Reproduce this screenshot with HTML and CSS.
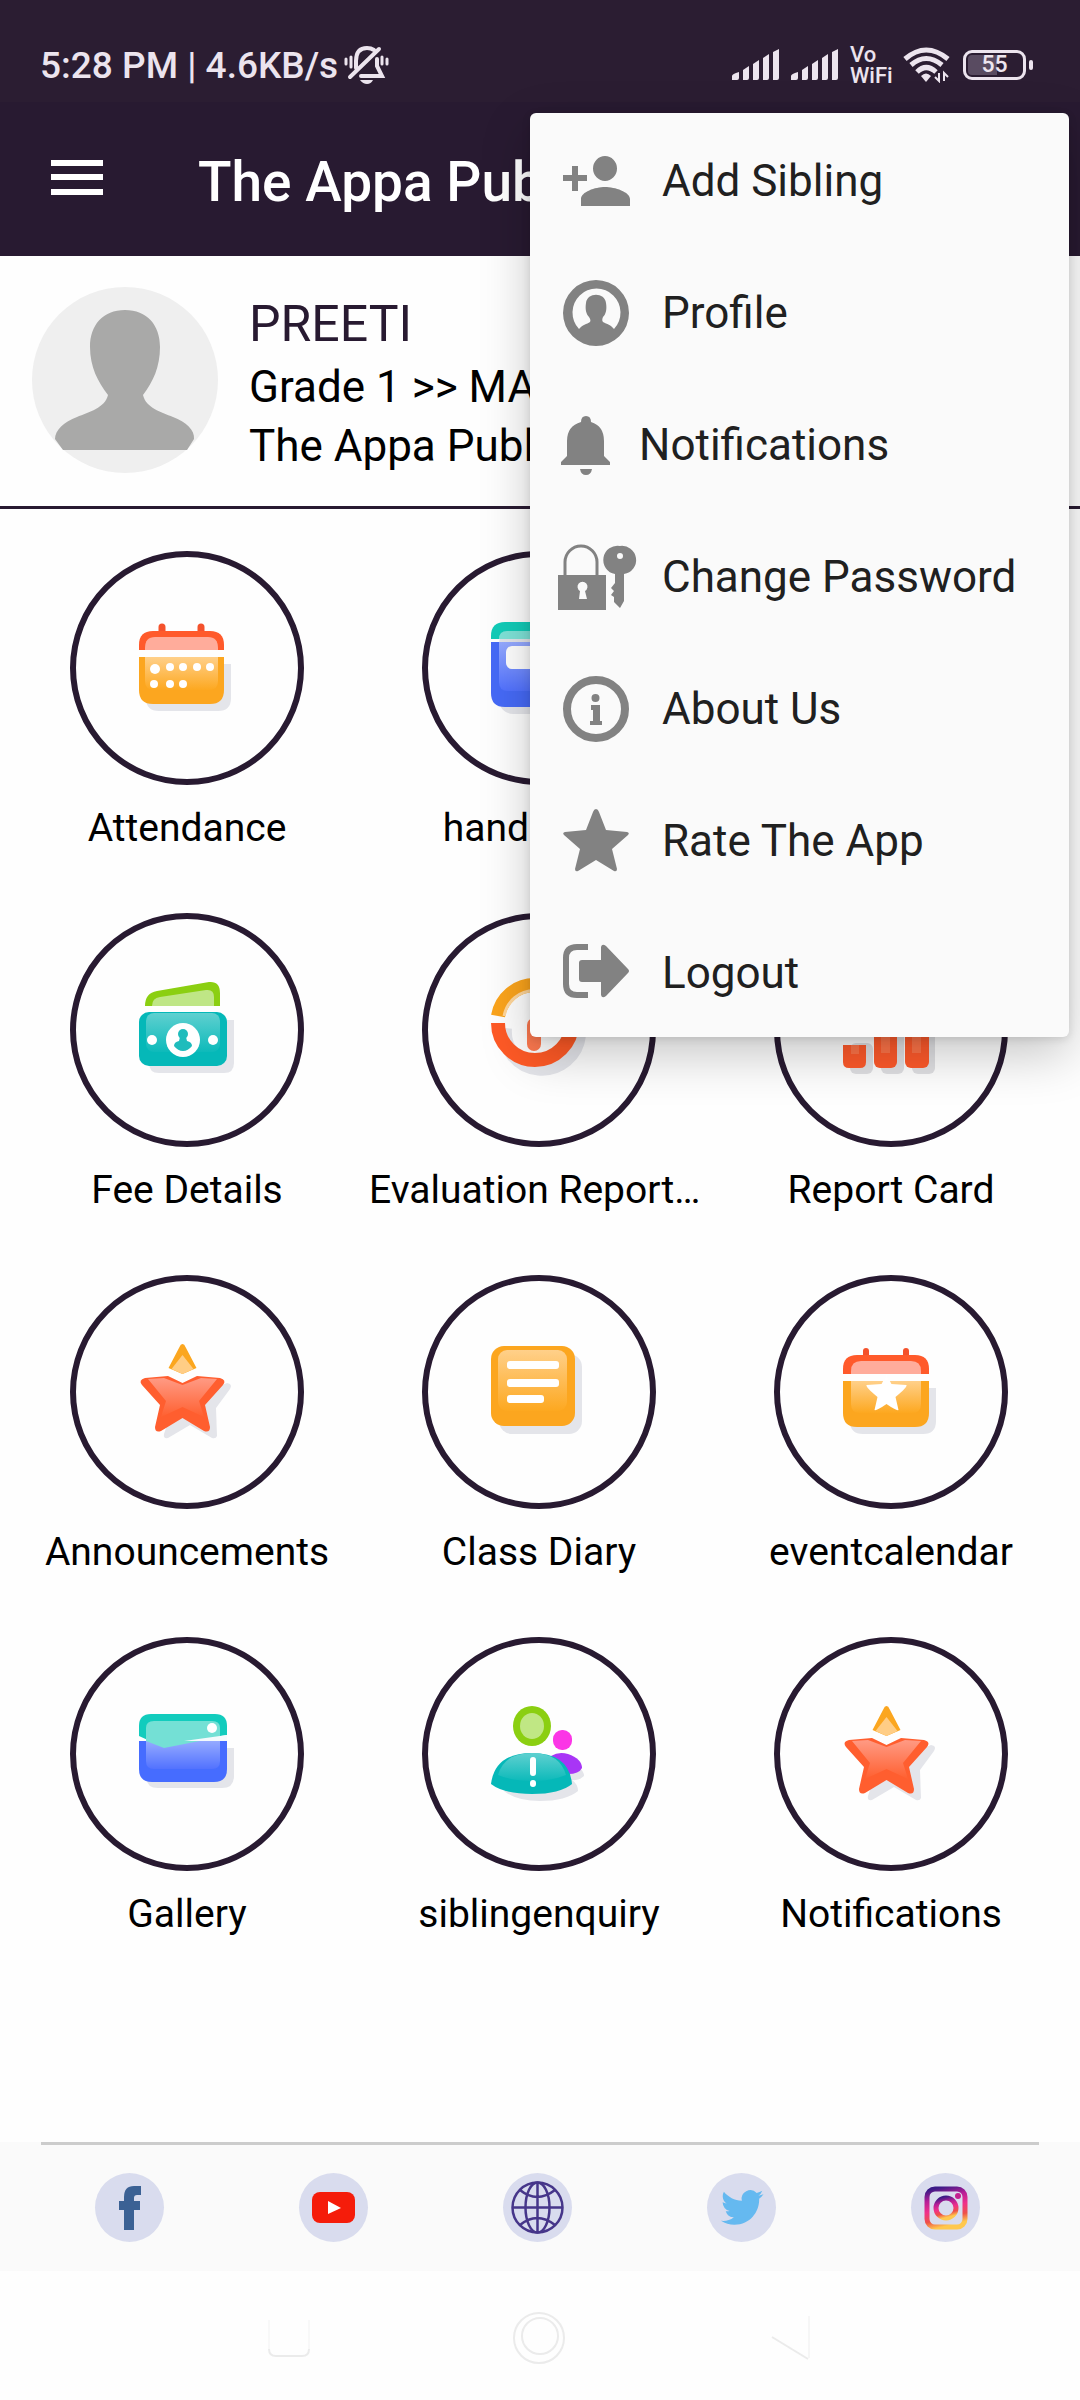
FILE: index.html
```html
<!DOCTYPE html>
<html lang="en">
<head>
<meta charset="utf-8">
<meta name="viewport" content="width=device-width, initial-scale=1">
<title>The Appa Public</title>
<link rel="stylesheet" href="styles.css">
</head>
<body>
<svg class="defs" aria-hidden="true">
  <defs>
    <linearGradient id="g-orange" x1="0" y1="0" x2="0" y2="1"><stop offset="0" stop-color="#ffd08a"/><stop offset="1" stop-color="#fda820"/></linearGradient>
    <linearGradient id="g-red" x1="0" y1="0" x2="0" y2="1"><stop offset="0" stop-color="#ff9a84"/><stop offset="1" stop-color="#ff6030"/></linearGradient>
    <linearGradient id="g-blue" x1="0" y1="0" x2="0" y2="1"><stop offset="0" stop-color="#95aaff"/><stop offset="1" stop-color="#5272ff"/></linearGradient>
    <linearGradient id="g-teal" x1="0" y1="0" x2="0" y2="1"><stop offset="0" stop-color="#5fd0d0"/><stop offset="1" stop-color="#0dbaba"/></linearGradient>
    <linearGradient id="g-insta" x1="0.15" y1="0" x2="0.4" y2="1"><stop offset="0" stop-color="#3a1a86"/><stop offset="0.28" stop-color="#b81f97"/><stop offset="0.55" stop-color="#f0308a"/><stop offset="0.8" stop-color="#ee5148"/><stop offset="1" stop-color="#ffc84e"/></linearGradient>
    <symbol id="star-tile" viewBox="6 6 222 222">
      <path d="M157 108q6 1 3 6l-14 19 1 28q-1 3-5 2l-22-13-22 13q-5 1-4-4l10-30z" fill="#e4e5ea"/>
      <path d="M112.500 69q2 0 3 3l11 21-14 6-14-6 11-21q1-3 3-3z" fill="#fba61f"/>
      <path d="M112.500 80l11 14-11 5-11-5z" fill="#ffcd85"/>
      <path d="M98 101l14.500 7 14.500-7 23 2q7 2 3 7l-18 20 5 22q0 6-6 4l-21.500-13-21.500 13q-6 2-6-4l5-22-18-20q-4-5 3-7z" fill="#ff5e2f"/>
      <path d="M94 103l18.500 7 18.500-7 16 1-18 22 5 16-21.500-10-21.500 10 5-16-18-22z" fill="url(#g-red)"/>
    </symbol>
    <symbol id="signal" viewBox="0 0 48 32">
      <path d="M0 31v-4q0-2 7-4v6q0 2-2 2zM11 31V21l6-4v12q0 2-2 2zM21 31V15l6-4v18q0 2-2 2zM31 31V9l6-4v24q0 2-2 2zM41 31V3l6-3v29q0 2-2 2z" fill="#ece4ee"/>
    </symbol>
  </defs>
</svg>

<div class="status">
  <span class="status-text">5:28 PM | 4.6KB/s</span>
  <svg class="mute" width="45" height="38" viewBox="0 0 45 38" fill="none" stroke="#ece4ee" stroke-width="4" stroke-linecap="round">
    <path d="M6 31L35 3M12 22V15Q12 2 23 2Q27 2 30 4M33 13V20L38 30H17"/>
    <path d="M2 13v5M7 11v10M43 13v5M38 11v7" stroke-width="3"/>
    <path d="M16 34h13q-2 4-6 4t-7-4z" fill="#ece4ee" stroke="none"/>
  </svg>
  <div class="status-icons">
    <svg width="48" height="32"><use href="#signal"/></svg>
    <svg width="48" height="32"><use href="#signal"/></svg>
    <span class="vowifi"><span>Vo</span><span>WiFi</span></span>
    <svg width="47" height="36" viewBox="0 0 47 36" fill="none" stroke="#ece4ee" stroke-width="5" stroke-linecap="butt">
      <path d="M2 12Q23 -6 45 12M8 18Q23 5 39 18M14 25Q23 16 33 25"/>
      <path d="M18 29q5-5 10 0l-5 6z" fill="#ece4ee" stroke="none"/>
      <path d="M36 26v8l-4-4M41 34v-8l4 4" stroke-width="2"/>
    </svg>
    <span class="battery"><span class="battery-level">55</span></span>
  </div>
</div>

<header class="bar">
  <button class="menu-button" type="button" aria-label="Open navigation">
    <svg width="52" height="36" viewBox="0 0 52 36"><path d="M0 0h52v6H0zM0 14h52v6H0zM0 29h52v6H0z" fill="#fff"/></svg>
  </button>
  <h1>The Appa Public</h1>
</header>

<section class="profile">
  <svg class="avatar" width="186" height="186" viewBox="0 0 186 186">
    <circle cx="93" cy="93" r="93" fill="#efefef"/>
    <path d="M93 23c22 0 35 15 35 37 0 20-7 35-17 48 3 13 18 17 30 22 13 5 22 13 21 22l-7 11H31l-8-11c0-9 9-17 22-22 12-5 28-9 31-22-10-13-18-28-18-48 0-22 13-37 35-37z" fill="#a9a9a8"/>
  </svg>
  <div class="profile-text">
    <h2>PREETI</h2>
    <p>Grade 1 &gt;&gt; MA</p>
    <p>The Appa Public</p>
  </div>
</section>

<main>
  <ul class="tiles">
    <li><a class="tile" href="#attendance">
      <span class="ring"><svg viewBox="6 6 222 222">
        <path d="M76 113h85v34q0 13-13 13H89q-13 0-13-13z" fill="#e4e5ea"/>
        <path d="M92 76v8M131 76v8" stroke="#f4522c" stroke-width="7" stroke-linecap="round"/>
        <path d="M69 99v-5q0-14 14-14h57q14 0 14 14v5z" fill="#ff5a2b"/>
        <path d="M75 99v-2q0-11 10-11h53q10 0 10 11v2z" fill="#ffac9b"/>
        <path d="M69 106h85v33q0 14-14 14H83q-14 0-14-14z" fill="#fca61f"/>
        <path d="M75 106h73v24q0 9-9 9H84q-9 0-9-9z" fill="url(#g-orange)"/>
        <g fill="#fff"><circle cx="85" cy="118" r="5"/><circle cx="100" cy="116" r="4"/><circle cx="113" cy="116" r="4"/><circle cx="127" cy="116" r="4"/><circle cx="140" cy="116" r="4"/><circle cx="84" cy="133" r="4"/><circle cx="100" cy="133" r="4"/><circle cx="113" cy="133" r="4"/></g>
      </svg></span>
      <span class="label">Attendance</span></a></li>
    <li><a class="tile" href="#handbooks">
      <span class="ring"><svg viewBox="6 6 222 222">
        <rect x="77" y="79" width="86" height="84" rx="14" fill="#e4e5ea"/>
        <path d="M69 88v-3q0-14 14-14h58q14 0 14 14v3z" fill="#12ccb8"/>
        <path d="M77 88q0-8 8-8h70v8z" fill="#7fe3d8"/>
        <path d="M69 91h86v51q0 14-14 14H83q-14 0-14-14z" fill="#466af7"/>
        <path d="M77 91h70v49H86q-9 0-9-9z" fill="url(#g-blue)"/>
        <rect x="84" y="95" width="57" height="23" rx="6" fill="#fff"/>
      </svg></span>
      <span class="label">handbooks</span></a></li>
    <li class="row-start"><a class="tile" href="#fees">
      <span class="ring"><svg viewBox="6 6 222 222">
        <path d="M79 107h85v43q0 10-10 10H89q-10 0-10-10z" fill="#e4e5ea"/>
        <path d="M75 93q0-13 12-15l52-9q11-1 11 11v13z" fill="#8bcf11"/>
        <path d="M82 93q0-8 8-9l46-7q8-1 8 7v9z" fill="#bfe686"/>
        <rect x="69" y="99" width="88" height="54" rx="10" fill="#05b8b8"/>
        <rect x="76" y="100" width="74" height="39" rx="8" fill="url(#g-teal)"/>
        <g fill="#fff"><circle cx="113" cy="127" r="17"/><circle cx="82" cy="127" r="5"/><circle cx="143" cy="127" r="5"/></g>
        <circle cx="113" cy="121" r="5" fill="#1fbcbc"/><path d="M110 124h6l1 4q5 1 5 5-4 5-9 5t-9-5q0-4 5-5z" fill="#1fbcbc"/>
      </svg></span>
      <span class="label">Fee Details</span></a></li>
    <li><a class="tile" href="#evaluation">
      <span class="ring"><svg viewBox="6 6 222 222" fill="none">
        <path d="M83 115a37 37 0 0 0 74 7" stroke="#e4e5ea" stroke-width="14"/>
        <path d="M76 103a37 37 0 0 1 73 0" stroke="#fba41c" stroke-width="14"/>
        <path d="M82 103a31 31 0 0 1 61 0" stroke="#ffd79c" stroke-width="3"/>
        <path d="M76 110a37 37 0 1 0 74 0" stroke="#ff5a26" stroke-width="14"/>
        <path d="M112 112v19" stroke="#ff7a50" stroke-width="14" stroke-linecap="round"/>
      </svg></span>
      <span class="label label-long">Evaluation Report…</span></a></li>
    <li><a class="tile" href="#report">
      <span class="ring"><svg viewBox="6 6 222 222">
        <g fill="#e0e0e3"><rect x="76" y="130" width="23" height="31" rx="6"/><rect x="107" y="110" width="23" height="51" rx="6"/><rect x="138" y="100" width="23" height="61" rx="6"/></g>
        <g fill="#ff5a2b"><path d="M69 132h23v17q0 6-6 6H75q-6 0-6-6z"/><rect x="100" y="100" width="23" height="55" rx="6"/><rect x="131" y="85" width="24" height="70" rx="6"/></g>
        <path d="M77 132h8v9h-8zM107 120h9v20h-9zM138 120h9v20h-9z" fill="#ff7448"/>
      </svg></span>
      <span class="label">Report Card</span></a></li>
    <li><a class="tile" href="#announcements">
      <span class="ring"><svg><use href="#star-tile"/></svg></span>
      <span class="label">Announcements</span></a></li>
    <li><a class="tile" href="#diary">
      <span class="ring"><svg viewBox="6 6 222 222">
        <rect x="77" y="79" width="83" height="80" rx="13" fill="#e4e5ea"/>
        <rect x="69" y="71" width="84" height="80" rx="13" fill="#fca61f"/>
        <rect x="76" y="75" width="69" height="61" rx="9" fill="url(#g-orange)"/>
        <g fill="#fff"><rect x="85" y="86" width="52" height="8" rx="3"/><rect x="85" y="104" width="52" height="8" rx="3"/><rect x="85" y="120" width="37" height="8" rx="3"/></g>
      </svg></span>
      <span class="label">Class Diary</span></a></li>
    <li><a class="tile" href="#events">
      <span class="ring"><svg viewBox="6 6 222 222">
        <path d="M76 113h86v33q0 13-13 13H89q-13 0-13-13z" fill="#e4e5ea"/>
        <path d="M92 76v8M132 76v8" stroke="#f4522c" stroke-width="6" stroke-linecap="round"/>
        <path d="M69 99v-5q0-14 14-14h58q14 0 14 14v5z" fill="#ff5a2b"/>
        <path d="M77 99v-3q0-10 10-10h50q10 0 10 10v3z" fill="#ffac9b"/>
        <path d="M69 106h86v32q0 14-14 14H83q-14 0-14-14z" fill="#fca61f"/>
        <path d="M77 106h70v23q0 9-9 9H86q-9 0-9-9z" fill="url(#g-orange)"/>
        <path d="M112.500 100l5 9 15 1q1 2-11 12l3 13q-2 1-12-6-10 7-12 6l3-13q-12-10-11-12l15-1z" fill="#fff"/>
      </svg></span>
      <span class="label">eventcalendar</span></a></li>
    <li><a class="tile" href="#gallery">
      <span class="ring"><svg viewBox="6 6 222 222">
        <path d="M76 111h88v28q0 12-12 12H88q-12 0-12-12z" fill="#e4e5ea"/>
        <path d="M69 104h88v28q0 13-13 13H82q-13 0-13-13z" fill="#466cff"/>
        <path d="M76 104h74v20q0 8-8 8H84q-8 0-8-8z" fill="url(#g-blue)"/>
        <path d="M69 99V89q0-12 12-12h64q12 0 12 12v9l-37 6H80z" fill="#12ccbd"/>
        <path d="M76 104V91q0-7 8-7h58q8 0 8 7v9l-56 11z" fill="#74e0d5"/>
        <path d="M157 98v6h-43z" fill="#f4fafc"/>
        <circle cx="142" cy="91" r="5" fill="#fff"/>
      </svg></span>
      <span class="label">Gallery</span></a></li>
    <li><a class="tile" href="#siblings">
      <span class="ring"><svg viewBox="6 6 222 222">
        <path d="M140 123q22 6 22 16-5 5-12 4 6 4 6 11-12 10-38 10-24 0-36-10z" fill="#e4e5ea"/>
        <rect x="131" y="93" width="19" height="20" rx="9" fill="#fb36e6"/>
        <path d="M129 119q8-5 17-2 14 5 14 14-3 6-14 6z" fill="#a835f6"/>
        <ellipse cx="110" cy="89" rx="19" ry="20" fill="#8bcf11"/>
        <ellipse cx="110" cy="89" rx="12" ry="13" fill="#c0e784"/>
        <path d="M69 147q4-31 41-31t40 31q-12 10-40 10t-41-10z" fill="#05b8b8"/>
        <path d="M76 138q6-22 34-22t34 22q-14 6-34 6t-34-6z" fill="url(#g-teal)"/>
        <path d="M111 123v13M111 146v1" stroke="#fff" stroke-width="6" stroke-linecap="round"/>
      </svg></span>
      <span class="label">siblingenquiry</span></a></li>
    <li><a class="tile" href="#notifications">
      <span class="ring"><svg><use href="#star-tile"/></svg></span>
      <span class="label">Notifications</span></a></li>
  </ul>
</main>

<footer class="social">
  <ul>
    <li><a href="#facebook" aria-label="Facebook"><svg viewBox="0 0 69 69"><path d="M46 13v9h-4q-3 0-3 3v3h6v9h-6v20h-10V37h-5v-9h5v-4q0-11 10-11z" fill="#3b6194"/></svg></a></li>
    <li><a href="#youtube" aria-label="YouTube"><svg viewBox="0 0 69 69"><rect x="13" y="19" width="43" height="31" rx="8" fill="#f51c0a"/><path d="M29 28l13 7-13 6z" fill="#fff"/></svg></a></li>
    <li><a href="#website" aria-label="Website"><svg viewBox="0 0 69 69" fill="none" stroke="#46368a" stroke-width="2.500"><circle cx="34.500" cy="34.500" r="25"/><ellipse cx="34.500" cy="34.500" rx="12" ry="25"/><path d="M34.500 9v51M9 34.500h51M17 17q17 14 35 0M17 52q17-14 35 0"/></svg></a></li>
    <li><a href="#twitter" aria-label="Twitter"><svg viewBox="0 0 69 69"><path transform="translate(14 13.200) scale(1.770)" fill="#65b9f0" d="M23.953 4.570a10 10 0 01-2.825.775 4.958 4.958 0 002.163-2.723c-.951.555-2.005.959-3.127 1.184a4.920 4.920 0 00-8.384 4.482C7.690 8.095 4.067 6.130 1.640 3.162a4.822 4.822 0 00-.666 2.475c0 1.710.870 3.213 2.188 4.096a4.904 4.904 0 01-2.228-.616v.060a4.923 4.923 0 003.946 4.827 4.996 4.996 0 01-2.212.085 4.936 4.936 0 004.604 3.417 9.867 9.867 0 01-6.102 2.105c-.390 0-.779-.023-1.170-.067a13.995 13.995 0 007.557 2.209c9.053 0 13.998-7.496 13.998-13.985 0-.210 0-.420-.015-.630A9.935 9.935 0 0024 4.590z"/></svg></a></li>
    <li><a href="#instagram" aria-label="Instagram"><svg viewBox="0 0 69 69"><g fill="none" stroke="url(#g-insta)" stroke-width="5"><rect x="16" y="16" width="38" height="38" rx="8"/><circle cx="35" cy="35" r="10"/></g><circle cx="47" cy="23" r="3" fill="#c3208f"/></svg></a></li>
  </ul>
</footer>

<nav class="system-nav" aria-label="System">
  <button type="button" aria-label="Recent apps"><svg width="52" height="52" viewBox="0 0 52 52" fill="none" stroke-width="2"><path d="M7 8v30M47 8v30" stroke="#f8f8f8"/><path d="M7 37q0 7 7 7h26q7 0 7-7" stroke="#ebebeb"/></svg></button>
  <button type="button" aria-label="Home"><svg width="52" height="52" viewBox="0 0 52 52" fill="none" stroke="#ebebeb" stroke-width="2"><circle cx="26" cy="26" r="25"/><circle cx="27" cy="24" r="18"/></svg></button>
  <button type="button" aria-label="Back"><svg width="52" height="52" viewBox="0 0 52 52" fill="none" stroke="#ebebeb" stroke-width="2"><path d="M8 25l36 22"/><path d="M45 46V4" stroke="#f6f6f6"/></svg></button>
</nav>

<div class="menu" role="menu">
  <button type="button" role="menuitem"><svg viewBox="0 0 66 66"><path d="M9 18h6v9h9v6h-9v10H9V33H0v-6h9zM42 8a12 12.500 0 1 1 0 25 12 12.500 0 0 1 0-25zM18 58v-7c0-7 14-12 24-12s25 5 25 12v7z"/></svg>Add Sibling</button>
  <button type="button" role="menuitem"><svg viewBox="0 0 66 66"><path fill-rule="evenodd" d="M33 0a33 33 0 1 1 0 66 33 33 0 0 1 0-66zM16 49c3-4 8-5 11-7 1-2 0-3-1-5-3-3-4-8-3-14 1-11 19-11 20 0 1 6 0 11-3 14-1 2-1 4 0 5 4 2 8 3 11 7a24 24 0 1 0-35 0z"/></svg>Profile</button>
  <button type="button" role="menuitem"><svg class="narrow" viewBox="0 0 43 66"><path d="M23 4q5 0 5 6 13 4 13 19v15l6 6v3H-2v-3l6-6V29q0-15 14-19 0-6 5-6zM17 57h12q-1 6-6 6t-6-6z"/></svg>Notifications</button>
  <button type="button" role="menuitem"><svg viewBox="0 0 66 66"><path d="M2 32V18a16 16 0 0 1 32 0v14" fill="none" stroke="#828282" stroke-width="3"/><path fill-rule="evenodd" d="M-5 31h48v35H-5zM16 55l1-8a5 5 0 1 1 5 0l2 8zM57 2a14 14 0 0 1 4 28v27l-4 7-6-6v-5l-3-2 3-4-3-3 4-5V30a14 14 0 0 1 5-28zM57 9a3 3 0 1 0 0 6 3 3 0 0 0 0-6z"/></svg>Change Password</button>
  <button type="button" role="menuitem"><svg viewBox="0 0 66 66"><circle cx="33" cy="33" r="29" fill="none" stroke="#828282" stroke-width="8"/><path d="M28 29h9v16h2v4H27v-4h3V34h-2zM32.500 18a4 4 0 1 1 0 8 4 4 0 0 1 0-8z"/></svg>About Us</button>
  <button type="button" role="menuitem"><svg viewBox="0 0 66 66"><path d="M33 1q2 0 3 3l7 18 21 2q3 1 1 3L49 41l5 20q0 3-3 2L33 52 15 63q-3 1-3-2l5-20L1 27q-2-2 1-3l21-2 7-18q1-3 3-3z"/></svg>Rate The App</button>
  <button type="button" role="menuitem"><svg viewBox="0 0 66 66"><path d="M25 7H14Q3 7 3 18v26q0 11 11 11h11" fill="none" stroke="#828282" stroke-width="6"/><path d="M19 20h19V7q1-4 5-1l22 23q2 2 0 4L43 56q-4 3-5-1V42H19q-3 0-3-3V23q0-3 3-3z"/></svg>Logout</button>
</div>
</body>
</html>
```
FILE: styles.css
```css
* { box-sizing: border-box; }

body {
  position: relative;
  display: flex;
  flex-direction: column;
  min-height: 100vh;
  margin: 0;
  background: #fefefe;
  color: #000;
  font-family: Roboto, "Liberation Sans", sans-serif;
}

h1, h2, p, ul { margin: 0; padding: 0; font-weight: 400; }
ul { list-style: none; }
a { color: inherit; text-decoration: none; }
svg { display: block; flex: none; }
button { padding: 0; border: 0; background: none; color: inherit; font: inherit; }

.defs { position: absolute; width: 0; height: 0; }

/* System status bar */
.status {
  display: flex;
  align-items: center;
  height: 102px;
  padding: 28px 46px 0 40px;
  background: #2b1d32;
  color: #ece4ee;
}
.status-text { padding-top: 2px; font-size: 37px; font-weight: 500; line-height: 44px; }
.mute { margin-left: 6px; }
.status-icons { display: flex; align-items: center; gap: 11px; margin-left: auto; }
.vowifi {
  display: flex;
  flex-direction: column;
  width: 42px;
  font-size: 22px;
  font-weight: 500;
  line-height: 21px;
}
.battery {
  position: relative;
  width: 63px;
  height: 30px;
  margin: 0 8px 0 2px;
  padding: 2px;
  border: 3px solid #ece4ee;
  border-radius: 9px;
}
.battery::after {
  content: "";
  position: absolute;
  top: 7px;
  right: -10px;
  width: 4px;
  height: 10px;
  border-radius: 2px;
  background: #ece4ee;
}
.battery-level {
  display: block;
  border-radius: 4px;
  background: linear-gradient(90deg, #594b61 55%, transparent 55%);
  font-size: 23px;
  font-weight: 500;
  line-height: 20px;
  text-align: center;
}

/* App bar */
.bar {
  display: flex;
  align-items: center;
  gap: 95px;
  height: 154px;
  padding-left: 51px;
  background: #281a31;
  color: #fff;
}
.menu-button { padding-bottom: 2px; }
h1 {
  padding-top: 6px;
  font-size: 55px;
  font-weight: 500;
  line-height: 64px;
  white-space: nowrap;
}

/* Student summary */
.profile {
  display: flex;
  gap: 31px;
  padding: 31px 32px 30px;
  border-bottom: 3px solid #281a31;
}
.profile-text { padding-top: 8px; }
h2 { margin-bottom: 5px; color: #281a31; font-size: 50px; line-height: 58px; }
.profile p { font-size: 44px; line-height: 59px; }

/* Feature tiles */
main { flex: 1; padding: 42px 13px 0 11px; }
.tiles {
  display: grid;
  grid-template-columns: repeat(3, 1fr);
  row-gap: 62px;
}
.row-start { grid-column-start: 1; }
.tile { display: flex; flex-direction: column; align-items: center; gap: 20px; }
.ring {
  width: 234px;
  height: 234px;
  border: 6px solid #281a31;
  border-radius: 50%;
}
.ring svg { width: 222px; height: 222px; }
.label { font-size: 39px; line-height: 46px; white-space: nowrap; }
.label-long { align-self: stretch; padding-left: 6px; }

/* Social links */
.social { padding: 0 41px 29px; background: #fafafa; }
.social ul {
  display: grid;
  grid-template-columns: repeat(5, 1fr);
  justify-items: center;
  margin: 0 -8px 0 -14px;
  padding-top: 28px;
}
.social::before { content: ""; display: block; height: 3px; background: #ccc; }
.social a {
  display: block;
  width: 69px;
  height: 69px;
  border-radius: 50%;
  background: #d9dcee;
}

/* System navigation */
.system-nav {
  display: flex;
  justify-content: center;
  gap: 199px;
  height: 129px;
  padding: 41px 2px 0 0;
}
.system-nav button { height: 52px; }

/* Overflow menu */
.menu {
  position: absolute;
  top: 113px;
  right: 11px;
  width: 539px;
  border-radius: 6px;
  background: #fafafa;
  box-shadow: 0 18px 50px rgba(0, 0, 0, .22), 0 2px 8px rgba(0, 0, 0, .12);
}
.menu button {
  display: flex;
  align-items: center;
  gap: 33px;
  width: 100%;
  height: 132px;
  padding: 3px 0 0 33px;
  color: #202020;
  font-size: 44px;
  line-height: 52px;
  white-space: nowrap;
}
.menu svg { width: 66px; height: 66px; overflow: visible; fill: #828282; }
.menu .narrow { width: 43px; }
```
